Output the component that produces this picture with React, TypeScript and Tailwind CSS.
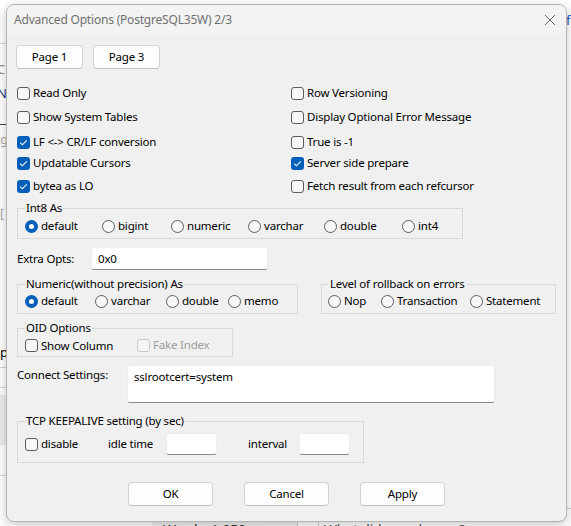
import React from 'react';

const font = { fontFamily: '"Noto Sans", "Segoe UI", sans-serif' };

function Check({
  label,
  checked = false,
  disabled = false,
}: {
  label: string;
  checked?: boolean;
  disabled?: boolean;
}) {
  return (
    <label className="flex items-center gap-[3px]">
      {checked ? (
        <span className="flex h-[13px] w-[13px] items-center justify-center rounded-[3px] bg-[#005fb8]">
          <svg width="13" height="13" viewBox="0 0 13 13">
            <polyline
              points="3.2,6.6 5.4,8.8 9.8,4.3"
              fill="none"
              stroke="white"
              strokeWidth="1.1"
            />
          </svg>
        </span>
      ) : (
        <span
          className={
            disabled
              ? 'h-[13px] w-[13px] rounded-[3px] border border-[#c8c8c8] bg-[#f5f5f5]'
              : 'h-[13px] w-[13px] rounded-[3px] border border-[#5c5c5c] bg-[#f7f7f7]'
          }
        />
      )}
      <span className={disabled ? 'text-[#9d9d9d]' : 'text-black'}>{label}</span>
    </label>
  );
}

function Radio({
  label,
  checked = false,
  className = '',
}: {
  label: string;
  checked?: boolean;
  className?: string;
}) {
  return (
    <label className={`flex items-center gap-[3px] ${className}`}>
      {checked ? (
        <span className="flex h-[13px] w-[13px] items-center justify-center rounded-full bg-[#005fb8]">
          <span className="h-[5px] w-[5px] rounded-full bg-white" />
        </span>
      ) : (
        <span className="h-[13px] w-[13px] rounded-full border border-[#5c5c5c] bg-[#f7f7f7]" />
      )}
      <span>{label}</span>
    </label>
  );
}

function Group({
  title,
  className = '',
  legendClass = 'px-[1px]',
  children,
}: {
  title: string;
  className?: string;
  legendClass?: string;
  children: React.ReactNode;
}) {
  return (
    <fieldset className={`border border-[#d9d9d9] ${className}`}>
      <legend className={`leading-[14px] ${legendClass}`}>{title}</legend>
      {children}
    </fieldset>
  );
}

function Btn({ label, className = '' }: { label: string; className?: string }) {
  return (
    <button
      type="button"
      className={`flex h-[24px] items-center justify-center rounded-[4px] border border-[#d3d3d3] border-b-[#c2c2c2] bg-[#fdfdfd] text-black ${className}`}
    >
      {label}
    </button>
  );
}

function Edit({ value = '', className = '' }: { value?: string; className?: string }) {
  return (
    <div
      className={`flex items-center rounded-[3px] border border-[#ececec] border-b-[#8a8a8a] bg-white pl-[6px] ${className}`}
    >
      {value}
    </div>
  );
}

export default function App() {
  return (
    <div
      className="relative h-[526px] w-[571px] overflow-hidden bg-white text-[11.5px] tracking-[-0.2px] text-black"
      style={font}
    >
      {/* page behind the dialog */}
      <div className="absolute left-0 top-[43px] h-px w-[8px] bg-[#d6d6d6]" />
      <div className="absolute left-[-3px] top-[60px] text-[13px] text-[#8c8c8c]">C</div>
      <div className="absolute left-[-3px] top-[84px] text-[13px] text-[#1f3f8f]">N</div>
      <div className="absolute left-0 top-[124px] h-px w-[8px] bg-[#444]" />
      <div className="absolute left-[-4px] top-[131px] text-[12px] text-[#a8a8a8]">tg</div>
      <div className="absolute left-0 top-[205px] text-[12px] text-[#aaa]">[</div>
      <div className="absolute left-0 top-[343px] text-[13px] text-black">p</div>
      <div className="absolute left-0 top-[367px] h-px w-[8px] bg-[#d6d6d6]" />
      <div className="absolute left-0 top-[387px] h-px w-[8px] bg-[#d6d6d6]" />
      <div className="absolute left-0 top-[395px] h-[50px] w-[8px] bg-[#ededed]" />
      <div className="absolute left-0 top-[475px] h-px w-[8px] bg-[#d6d6d6]" />
      <div className="absolute left-[566px] top-[11px] text-[13px] text-[#1a56c8]">f</div>
      <div className="absolute left-[560px] top-[508px] h-px w-[12px] bg-[#d0d0d0]" />
      <div className="absolute left-[152px] top-[518px] h-[10px] w-[146px] border-r border-[#cfcfcf] bg-[#efefef]" />
      <div className="absolute left-[163px] top-[519px] text-[14px] text-[#333]">Words: 1,059 ✕</div>
      <div className="absolute left-[318px] top-[518px] h-[10px] w-[240px] border-l border-[#cfcfcf]" />
      <div className="absolute left-[324px] top-[519px] text-[14px] text-[#555]">What did you change?</div>

      {/* dialog */}
      <div className="absolute left-[6px] top-[4px] flex h-[518px] w-[561px] flex-col overflow-hidden rounded-[8px] border border-[#b4b4b4] bg-[#f0f0f0] shadow-[0_3px_12px_rgba(0,0,0,0.22)]">
        <div className="flex h-[29px] items-center justify-between bg-[#f3f3f3] pl-[7px] pr-[10px] text-[12px] text-[#707070]">
          <span className="pt-[1px]">Advanced Options (PostgreSQL35W) 2/3</span>
          <svg width="12" height="12" viewBox="0 0 12 12" className="mt-[1px]">
            <path d="M1 1 L11 11 M11 1 L1 11" stroke="#6a6a6a" strokeWidth="1" />
          </svg>
        </div>

        <div className="flex flex-col pl-[9px]">
          <div className="mt-[11px] flex gap-[10px]">
            <Btn label="Page 1" className="w-[67px]" />
            <Btn label="Page 3" className="w-[67px]" />
          </div>

          <div className="grid grid-cols-[274px_1fr] pl-[1px]">
            <div className="mt-[14px] flex h-[20px]"><Check label="Read Only" /></div>
            <div className="mt-[14px] flex h-[20px]"><Check label="Row Versioning" /></div>
            <div className="mt-[4px] flex h-[20px]"><Check label="Show System Tables" /></div>
            <div className="mt-[4px] flex h-[20px]"><Check label="Display Optional Error Message" /></div>
            <div className="mt-[5px] flex h-[20px]"><Check label="LF <-> CR/LF conversion" checked /></div>
            <div className="mt-[5px] flex h-[20px]"><Check label="True is -1" /></div>
            <div className="mt-[1px] flex h-[20px]"><Check label="Updatable Cursors" checked /></div>
            <div className="mt-[1px] flex h-[20px]"><Check label="Server side prepare" checked /></div>
            <div className="mt-[3px] flex h-[20px]"><Check label="bytea as LO" checked /></div>
            <div className="mt-[3px] flex h-[20px]"><Check label="Fetch result from each refcursor" /></div>
          </div>

          <Group title="Int8 As" className="ml-[1px] mt-[5px] w-[446px] pb-[4px] pl-[7px]">
            <div className="mt-[3px] flex h-[16px]">
              <Radio label="default" checked className="w-[77px]" />
              <Radio label="bigint" className="w-[69px]" />
              <Radio label="numeric" className="w-[77px]" />
              <Radio label="varchar" className="w-[76px]" />
              <Radio label="double" className="w-[78px]" />
              <Radio label="int4" />
            </div>
          </Group>

          <div className="mt-[8px] flex h-[23px] items-center">
            <span className="w-[75px] pl-[1px]">Extra Opts:</span>
            <Edit value="0x0" className="h-[23px] w-[177px]" />
          </div>

          <div className="mt-[7px] flex gap-[23px]">
            <Group title="Numeric(without precision) As" className="ml-[1px] w-[281px] pb-[4px] pl-[7px]">
              <div className="mt-[2px] flex h-[16px]">
                <Radio label="default" checked className="w-[70px]" />
                <Radio label="varchar" className="w-[71px]" />
                <Radio label="double" className="w-[62px]" />
                <Radio label="memo" />
              </div>
            </Group>
            <Group
              title="Level of rollback on errors"
              className="w-[235px] pb-[4px] pl-[6px]"
              legendClass="px-[2px]"
            >
              <div className="mt-[2px] flex h-[16px]">
                <Radio label="Nop" className="w-[53px]" />
                <Radio label="Transaction" className="w-[89px]" />
                <Radio label="Statement" />
              </div>
            </Group>
          </div>

          <Group title="OID Options" className="ml-[1px] mt-[7px] w-[216px] pb-[3px] pl-[7px]">
            <div className="mt-[2px] flex h-[16px]">
              <div className="w-[112px]"><Check label="Show Column" /></div>
              <Check label="Fake Index" disabled />
            </div>
          </Group>

          <div className="mt-[8px] flex">
            <span className="w-[111px] pl-[1px] pt-[1px]">Connect Settings:</span>
            <div className="h-[38px] w-[368px] rounded-[3px] border border-[#ececec] border-b-[#8a8a8a] bg-white pl-[6px] pt-[2px]">
              sslrootcert=system
            </div>
          </div>

          <Group title="TCP KEEPALIVE setting (by sec)" className="ml-[1px] mt-[11px] w-[347px] pb-[7px] pl-[7px]">
            <div className="mt-[5px] flex h-[22px] items-center">
              <div className="w-[83px]"><Check label="disable" /></div>
              <span className="w-[58px]">idle time</span>
              <Edit className="h-[22px] w-[51px]" />
              <span className="ml-[31px] w-[51px]">interval</span>
              <Edit className="h-[22px] w-[51px]" />
            </div>
          </Group>

          <div className="ml-[112px] mt-[19px] flex gap-[31px]">
            <Btn label="OK" className="w-[85px]" />
            <Btn label="Cancel" className="w-[85px]" />
            <Btn label="Apply" className="w-[85px]" />
          </div>
        </div>
      </div>
    </div>
  );
}
